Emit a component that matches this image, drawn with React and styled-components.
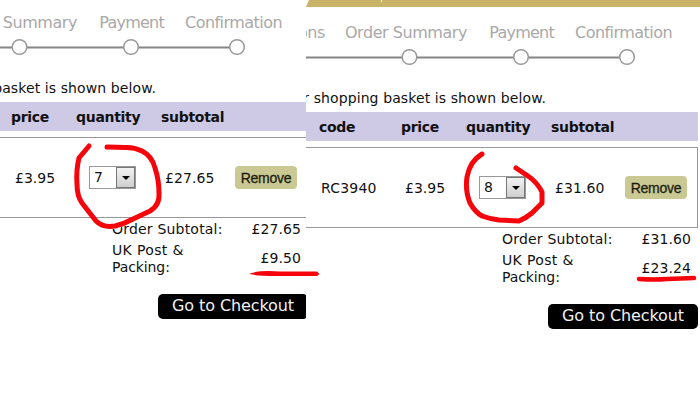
import styled, { createGlobalStyle } from "styled-components";

const GlobalStyle = createGlobalStyle`
  * {
    box-sizing: border-box;
  }
  body {
    margin: 0;
    background-color: white;
    overflow: hidden;
  }
`;

const Page = styled.main`
  position: relative;
  display: flex;
  width: 700px;
  height: 400px;
  overflow: hidden;
  background-color: white;
  color: #111;
  font-family: "DejaVu Sans", Verdana, sans-serif;
  font-size: 14px;
`;

const Panel = styled.section`
  display: flex;
  justify-content: flex-end;
  flex: 0 0 ${({ $width }) => $width}px;
  height: 400px;
  overflow: hidden;
`;

// wider than the panel, so its left part is cut off
const Basket = styled.div`
  flex: 0 0 500px;
  margin-right: ${({ $bleed }) => -$bleed}px;
  margin-top: ${({ $banner }) => ($banner ? 0 : -3)}px;
`;

const Banner = styled.div`
  height: 7px;
  margin-right: -2px;
  padding-left: 183px;
  background-color: #c9b368;
  clip-path: polygon(111px 0, 100% 0, 100% 100%, 108px 100%);
`;

const BannerMark = styled.div`
  width: 1px;
  height: 2px;
  background-color: white;
`;

const Steps = styled.ol`
  display: grid;
  grid-template-columns: 127px 142px 87px 118px;
  height: 75px;
  margin: 0;
  padding: 15px 0 0;
  list-style: none;
`;

const Step = styled.li`
  color: #a9a9a9;
  font-size: 16px;
  line-height: 22px;
  text-align: right;
  letter-spacing: ${({ $spacing }) => $spacing}px;
  white-space: nowrap;
`;

const Track = styled.svg`
  display: block;
  width: 500px;
  height: 18px;
  margin-top: -34px;
`;

const Intro = styled.p`
  height: 46px;
  margin: 0;
  padding: 22px 152px 0 0;
  line-height: 20px;
  text-align: right;
  letter-spacing: 0.1px;
  white-space: nowrap;
`;

const Row = styled.div`
  display: grid;
  grid-template-columns: 121px 82px 65px 85px 74px 1fr;
  align-items: center;
  white-space: nowrap;
`;

const HeadRow = styled(Row)`
  height: 29px;
  background-color: #cecae6;
  font-weight: bold;
  letter-spacing: -0.3px;
`;

const ItemRow = styled(Row)`
  height: 81px;
  margin-top: 6px;
  border: 1px solid #999;
`;

const Cell = styled.span`
  padding-left: ${({ $pad }) => $pad || 0}px;
  letter-spacing: ${({ $spacing }) => $spacing}px;
`;

const Quantity = styled.div`
  display: flex;
  width: 47px;
  height: 23px;
  margin-left: 12px;
  border: 1px solid #999;
  line-height: 21px;
`;

const QuantityValue = styled.span`
  flex: 1;
  padding-left: 4px;
`;

const Arrow = styled.span`
  display: flex;
  align-items: center;
  justify-content: center;
  width: 19px;
  border: 1px solid #777;
  background: linear-gradient(#f2f2f2, #cfcfcf);
`;

const Remove = styled.button`
  width: 62px;
  height: 23px;
  margin-left: -1px;
  padding: 0;
  border: 0;
  border-radius: 4px;
  background-color: #cac994;
  color: #1d1d10;
  font-family: "Liberation Sans", Arial, sans-serif;
  font-size: 14px;
  letter-spacing: -0.25px;
  -webkit-text-stroke: 0.3px #1d1d10;
`;

const Totals = styled.dl`
  display: grid;
  grid-template-columns: 120px 69px;
  align-items: center;
  row-gap: 2px;
  margin: 3px 0 0 304px;
  line-height: 17px;
`;

const TotalName = styled.dt`
  display: flex;
  flex-direction: column;
  padding-top: ${({ $top }) => $top || 0}px;
  white-space: nowrap;
`;

const TotalLine = styled.span`
  letter-spacing: ${({ $spacing }) => $spacing || 0}px;
`;

const TotalValue = styled.dd`
  margin: 0;
  text-align: right;
  letter-spacing: 0.1px;
`;

const Checkout = styled.button`
  display: block;
  width: 150px;
  height: 25px;
  margin: 18px 0 0 350px;
  padding: 0 0 2px;
  border: 0;
  border-radius: 5px;
  background-color: black;
  color: #f2f2f2;
  font-family: inherit;
  font-size: 16px;
  letter-spacing: -0.1px;
  white-space: nowrap;
`;

const Marks = styled.svg`
  position: absolute;
  top: 0;
  left: 0;
  width: 700px;
  height: 400px;
  pointer-events: none;
`;

const ShoppingBasket = ({
  steps,
  intro,
  code,
  quantity,
  subtotal,
  postage,
  banner,
  bleed,
}) => (
  <Basket $bleed={bleed} $banner={banner}>
    {banner && (
      <Banner>
        <BannerMark />
      </Banner>
    )}
    <Steps>
      <Step $spacing={-0.4}>{steps[0]}</Step>
      <Step $spacing={-0.45}>{steps[1]}</Step>
      <Step $spacing={-0.75}>Payment</Step>
      <Step $spacing={-0.55}>Confirmation</Step>
    </Steps>
    <Track viewBox="0 0 500 18">
      <path d="M0 9.5H429" stroke="#858585" strokeWidth="2" />
      {[211.5, 323, 429].map((x) => (
        <circle
          key={x}
          cx={x}
          cy="9"
          r="7.3"
          fill="white"
          stroke="#999"
          strokeWidth="1.5"
        />
      ))}
    </Track>
    <Intro>{intro}</Intro>
    <HeadRow>
      <Cell />
      <Cell>{code && "code"}</Cell>
      <Cell>price</Cell>
      <Cell>quantity</Cell>
      <Cell>subtotal</Cell>
    </HeadRow>
    <ItemRow>
      <Cell />
      <Cell $pad={1} $spacing={0.2}>
        {code}
      </Cell>
      <Cell $pad={3}>£3.95</Cell>
      <Quantity>
        <QuantityValue>{quantity}</QuantityValue>
        <Arrow>
          <svg width="8" height="4">
            <path d="M0 0H8L4 4Z" />
          </svg>
        </Arrow>
      </Quantity>
      <Cell $pad={3} $spacing={0.1}>
        {subtotal}
      </Cell>
      <Remove>Remove</Remove>
    </ItemRow>
    <Totals>
      <TotalName>
        <TotalLine $spacing={0.2}>Order Subtotal:</TotalLine>
      </TotalName>
      <TotalValue>{subtotal}</TotalValue>
      <TotalName $top={2}>
        <TotalLine $spacing={0.35}>UK Post &amp;</TotalLine>
        <TotalLine $spacing={-0.1}>Packing:</TotalLine>
      </TotalName>
      <TotalValue>{postage}</TotalValue>
    </Totals>
    <Checkout>Go to Checkout</Checkout>
  </Basket>
);

const App = () => (
  <Page>
    <GlobalStyle />
    <Panel $width={306}>
      <ShoppingBasket
        steps={["", "Summary"]}
        intro="basket is shown below."
        quantity={7}
        subtotal="£27.65"
        postage="£9.50"
        bleed={2}
      />
    </Panel>
    <Panel $width={394}>
      <ShoppingBasket
        steps={["ons", "Order Summary"]}
        intro="r shopping basket is shown below."
        code="RC3940"
        quantity={8}
        subtotal="£31.60"
        postage="£23.24"
        bleed={-2}
        banner
      />
    </Panel>
    <Marks
      viewBox="0 0 700 400"
      fill="none"
      stroke="#f5050b"
      strokeWidth="5"
      strokeLinecap="round"
      strokeLinejoin="round"
    >
      <path d="M106 225.500L118 225.500" stroke="white" strokeWidth="7" />
      <path d="M89 146L79 158Q76 170 77 184Q77 196 82 203L96 221Q103 228 115 226Q124 224 133 219L150 211Q160 205 159 193Q159 180 155 168Q152 156 142 151Q134 147 125 147.500L107 147" />
      <path d="M482 154Q470 161 467 177Q465 191 470 203Q475 212 482 216Q490 219 499 220L519 221Q526 218 532 213L542 203V192Q537 182 528 176L516 168" />
      <path
        d="M249 274Q257 270 280 271.500L317 271.500Q321 274 317 276H275Q258 276 249 274Z"
        fill="#f5050b"
        stroke="none"
      />
      <path d="M639 279Q655 280 667 279L694 278" strokeWidth="4.500" />
    </Marks>
  </Page>
);

export default App;
